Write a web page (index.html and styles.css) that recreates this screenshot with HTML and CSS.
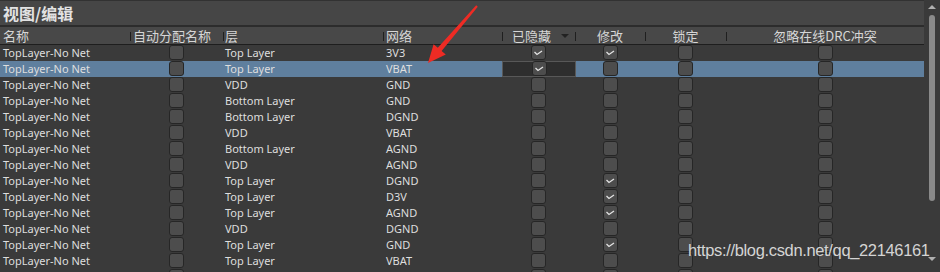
FILE: index.html
```
<!DOCTYPE html>
<html lang="zh">
<head>
<meta charset="utf-8">
<link rel="stylesheet" href="styles.css">
</head>
<body>
<div class="panel">
  <div class="main">
    <div class="title">视图/编辑</div>
    <div class="grid head">
      <div class="h h-left">名称</div>
      <div class="h h-left h-div">自动分配名称</div>
      <div class="h h-left h-div h-layer">层</div>
      <div class="h h-left h-div">网络</div>
      <div class="h h-center h-div h-hidden">已隐藏<span class="sort"></span></div>
      <div class="h h-center h-div">修改</div>
      <div class="h h-center h-div">锁定</div>
      <div class="h h-center h-div">忽略在线DRC冲突</div>
    </div>
    <div class="rows">
      <div class="grid row">
        <div class="t name">TopLayer-No Net</div><div class="cb-cell"><span class="cb"></span></div><div class="t layer">Top Layer</div><div class="t net">3V3</div>
        <div class="cb-cell"><span class="cb on"></span></div><div class="cb-cell"><span class="cb on"></span></div><div class="cb-cell"><span class="cb"></span></div><div class="cb-cell"><span class="cb"></span></div>
      </div>
      <div class="grid row sel">
        <div class="t name">TopLayer-No Net</div><div class="cb-cell"><span class="cb"></span></div><div class="t layer">Top Layer</div><div class="t net">VBAT</div>
        <div class="cb-cell edit"><span class="cb on"></span></div><div class="cb-cell"><span class="cb"></span></div><div class="cb-cell"><span class="cb"></span></div><div class="cb-cell"><span class="cb"></span></div>
      </div>
      <div class="grid row">
        <div class="t name">TopLayer-No Net</div><div class="cb-cell"><span class="cb"></span></div><div class="t layer">VDD</div><div class="t net">GND</div>
        <div class="cb-cell"><span class="cb"></span></div><div class="cb-cell"><span class="cb"></span></div><div class="cb-cell"><span class="cb"></span></div><div class="cb-cell"><span class="cb"></span></div>
      </div>
      <div class="grid row">
        <div class="t name">TopLayer-No Net</div><div class="cb-cell"><span class="cb"></span></div><div class="t layer">Bottom Layer</div><div class="t net">GND</div>
        <div class="cb-cell"><span class="cb"></span></div><div class="cb-cell"><span class="cb"></span></div><div class="cb-cell"><span class="cb"></span></div><div class="cb-cell"><span class="cb"></span></div>
      </div>
      <div class="grid row">
        <div class="t name">TopLayer-No Net</div><div class="cb-cell"><span class="cb"></span></div><div class="t layer">Bottom Layer</div><div class="t net">DGND</div>
        <div class="cb-cell"><span class="cb"></span></div><div class="cb-cell"><span class="cb"></span></div><div class="cb-cell"><span class="cb"></span></div><div class="cb-cell"><span class="cb"></span></div>
      </div>
      <div class="grid row">
        <div class="t name">TopLayer-No Net</div><div class="cb-cell"><span class="cb"></span></div><div class="t layer">VDD</div><div class="t net">VBAT</div>
        <div class="cb-cell"><span class="cb"></span></div><div class="cb-cell"><span class="cb"></span></div><div class="cb-cell"><span class="cb"></span></div><div class="cb-cell"><span class="cb"></span></div>
      </div>
      <div class="grid row">
        <div class="t name">TopLayer-No Net</div><div class="cb-cell"><span class="cb"></span></div><div class="t layer">Bottom Layer</div><div class="t net">AGND</div>
        <div class="cb-cell"><span class="cb"></span></div><div class="cb-cell"><span class="cb"></span></div><div class="cb-cell"><span class="cb"></span></div><div class="cb-cell"><span class="cb"></span></div>
      </div>
      <div class="grid row">
        <div class="t name">TopLayer-No Net</div><div class="cb-cell"><span class="cb"></span></div><div class="t layer">VDD</div><div class="t net">AGND</div>
        <div class="cb-cell"><span class="cb"></span></div><div class="cb-cell"><span class="cb"></span></div><div class="cb-cell"><span class="cb"></span></div><div class="cb-cell"><span class="cb"></span></div>
      </div>
      <div class="grid row">
        <div class="t name">TopLayer-No Net</div><div class="cb-cell"><span class="cb"></span></div><div class="t layer">Top Layer</div><div class="t net">DGND</div>
        <div class="cb-cell"><span class="cb"></span></div><div class="cb-cell"><span class="cb on"></span></div><div class="cb-cell"><span class="cb"></span></div><div class="cb-cell"><span class="cb"></span></div>
      </div>
      <div class="grid row">
        <div class="t name">TopLayer-No Net</div><div class="cb-cell"><span class="cb"></span></div><div class="t layer">Top Layer</div><div class="t net">D3V</div>
        <div class="cb-cell"><span class="cb"></span></div><div class="cb-cell"><span class="cb on"></span></div><div class="cb-cell"><span class="cb"></span></div><div class="cb-cell"><span class="cb"></span></div>
      </div>
      <div class="grid row">
        <div class="t name">TopLayer-No Net</div><div class="cb-cell"><span class="cb"></span></div><div class="t layer">Top Layer</div><div class="t net">AGND</div>
        <div class="cb-cell"><span class="cb"></span></div><div class="cb-cell"><span class="cb on"></span></div><div class="cb-cell"><span class="cb"></span></div><div class="cb-cell"><span class="cb"></span></div>
      </div>
      <div class="grid row">
        <div class="t name">TopLayer-No Net</div><div class="cb-cell"><span class="cb"></span></div><div class="t layer">VDD</div><div class="t net">DGND</div>
        <div class="cb-cell"><span class="cb"></span></div><div class="cb-cell"><span class="cb"></span></div><div class="cb-cell"><span class="cb"></span></div><div class="cb-cell"><span class="cb"></span></div>
      </div>
      <div class="grid row">
        <div class="t name">TopLayer-No Net</div><div class="cb-cell"><span class="cb"></span></div><div class="t layer">Top Layer</div><div class="t net">GND</div>
        <div class="cb-cell"><span class="cb"></span></div><div class="cb-cell"><span class="cb on"></span></div><div class="cb-cell"><span class="cb"></span></div><div class="cb-cell"><span class="cb"></span></div>
      </div>
      <div class="grid row">
        <div class="t name">TopLayer-No Net</div><div class="cb-cell"><span class="cb"></span></div><div class="t layer">Top Layer</div><div class="t net">VBAT</div>
        <div class="cb-cell"><span class="cb"></span></div><div class="cb-cell"><span class="cb"></span></div><div class="cb-cell"><span class="cb"></span></div><div class="cb-cell"><span class="cb"></span></div>
      </div>
      <div class="grid row">
        <div class="t name"></div><div class="cb-cell"><span class="cb"></span></div><div class="t layer"></div><div class="t net"></div>
        <div class="cb-cell"><span class="cb"></span></div><div class="cb-cell"><span class="cb"></span></div><div class="cb-cell"><span class="cb"></span></div><div class="cb-cell"><span class="cb"></span></div>
      </div>
    </div>
  </div>
  <div class="scroll">
    <span class="arr-up"></span>
    <span class="thumb"></span>
    <span class="arr-down"></span>
  </div>
  <svg class="annot" width="940" height="272" viewBox="0 0 940 272">
    <polygon points="476.2,5.3 477.8,6.7 441.6,51 445.8,54.6 428,63 433.6,44.2 437.8,47.8" fill="#ee2b24"/>
  </svg>
  <div class="wm">https://blog.csdn.net/qq_22146161</div>
</div>
</body>
</html>
```
FILE: styles.css
```
html, body {
  margin: 0;
  padding: 0;
}
body {
  width: 940px;
  height: 272px;
  overflow: hidden;
  background: #3a3a3a;
  font-family: "Noto Sans", "Noto Sans CJK SC", sans-serif;
}
.panel {
  position: relative;
  display: flex;
  width: 940px;
  height: 272px;
  overflow: hidden;
}
.main {
  width: 924px;
  flex: none;
}
.title {
  height: 24px;
  line-height: 24px;
  border-top: 1px solid #323232;
  border-bottom: 1px solid #2c2c2c;
  background: #464646;
  color: #e2e2e2;
  font: bold 16px "Noto Sans CJK SC", sans-serif;
  padding-left: 3px;
}
.grid {
  display: grid;
  grid-template-columns: 130px 93px 160px 119px 73px 70px 81px 198px;
}
.head {
  height: 17px;
  border-top: 1px solid #2c2c2c;
  border-bottom: 1px solid #1e1e1e;
  background: #484848;
}
.h {
  position: relative;
  font: 13px "Noto Sans CJK SC", sans-serif;
  color: #d6d6d6;
  line-height: 17px;
  white-space: nowrap;
}
.h-left { padding-left: 3px; }
.h-layer { padding-left: 2px; }
.h-center { text-align: center; }
.h-div::before {
  content: "";
  position: absolute;
  left: 0;
  top: 5px;
  height: 9px;
  border-left: 1px solid #1f1f1f;
}
.h-hidden { padding-right: 14px; }
.sort {
  position: absolute;
  left: 59px;
  top: 7px;
  width: 0;
  height: 0;
  border-left: 4px solid transparent;
  border-right: 4px solid transparent;
  border-top: 4px solid #222;
}
.rows {
  height: 227px;
  overflow: hidden;
}
.row {
  height: 16px;
}
.row.sel {
  background: #5f7f9e;
}
.t {
  font-size: 11px;
  line-height: 16px;
  color: #dedede;
  white-space: nowrap;
}
.name { padding-left: 3px; }
.layer { padding-left: 2px; }
.net { padding-left: 3px; }
.cb-cell {
  display: flex;
  justify-content: center;
  align-items: flex-start;
}
.cb-cell.edit {
  background: #2e2e2e;
  box-shadow: inset 0 0 0 1px #585858;
  margin-right: -1px;
}
.cb {
  display: block;
  box-sizing: border-box;
  width: 15px;
  height: 15px;
  border: 1px solid #262626;
  border-radius: 3px;
  background: #4d4d4d;
}
.cb.on {
  background: #4d4d4d url("data:image/svg+xml;utf8,<svg xmlns='http://www.w3.org/2000/svg' width='13' height='13'><polyline points='2.5,6 5,8.5 10,5' fill='none' stroke='%23e4e4e4' stroke-width='1.3'/></svg>") no-repeat center;
}
.scroll {
  width: 16px;
  flex: none;
  display: flex;
  flex-direction: column;
  align-items: center;
  padding-top: 5px;
  box-sizing: border-box;
}
.arr-up {
  width: 0;
  height: 0;
  border-left: 4px solid transparent;
  border-right: 4px solid transparent;
  border-bottom: 4px solid #b0b0b0;
}
.thumb {
  margin-top: 6px;
  width: 6px;
  height: 186px;
  border-radius: 3px;
  background: #8a8a8a;
}
.arr-down {
  margin-top: 56px;
  width: 0;
  height: 0;
  border-left: 4px solid transparent;
  border-right: 4px solid transparent;
  border-top: 4px solid #b0b0b0;
}
.annot {
  position: absolute;
  left: 0;
  top: 0;
  pointer-events: none;
}
.wm {
  position: absolute;
  left: 688px;
  top: 241px;
  font: 16.5px "Liberation Sans", Arial, sans-serif;
  letter-spacing: -0.35px;
  color: #d4d4d4;
  white-space: nowrap;
}
```
